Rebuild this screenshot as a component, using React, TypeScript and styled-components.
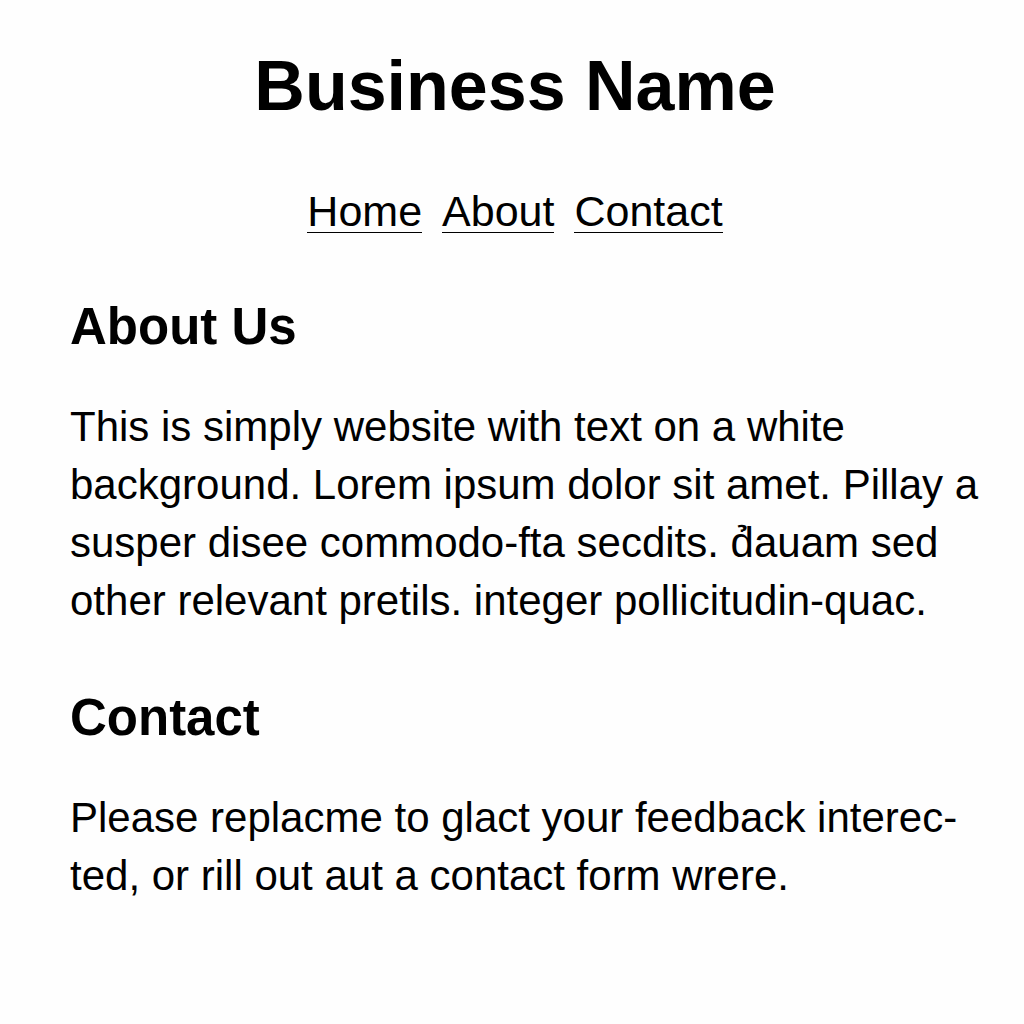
import React from "react";
import styled, { createGlobalStyle } from "styled-components";

const GlobalStyle = createGlobalStyle`
  body {
    margin: 0;
    background: #fefefe;
    color: #000;
    font-family: "Liberation Sans", Arial, sans-serif;
  }
`;

const Page = styled.div`
  padding: 46px 40px 48px 70px;
`;

const Header = styled.header`
  display: flex;
  flex-direction: column;
  align-items: center;
  gap: 64px;
  padding: 0 24px 64px 0;
`;

const Title = styled.h1`
  margin: 0;
  font-size: 70px;
  line-height: 80px;
`;

const Nav = styled.nav`
  display: flex;
  gap: 20px;
`;

const NavLink = styled.a`
  color: inherit;
  font-size: 43px;
  line-height: 42px;
  text-decoration: none;
  border-bottom: 1px solid #000;
`;

const Main = styled.main`
  display: flex;
  flex-direction: column;
  gap: 58px;
`;

const Heading = styled.h2`
  margin: 0 0 41px;
  font-size: 51px;
  line-height: 60px;
`;

const Text = styled.p`
  margin: 0;
  font-size: 42px;
  line-height: 58px;
`;

export default function App() {
  return (
    <>
      <GlobalStyle />
      <Page>
        <Header>
          <Title>Business Name</Title>
          <Nav>
            <NavLink href="#home">Home</NavLink>
            <NavLink href="#about">About</NavLink>
            <NavLink href="#contact">Contact</NavLink>
          </Nav>
        </Header>
        <Main>
          <section id="about">
            <Heading>About Us</Heading>
            <Text>
              This is simply website with text on a white background. Lorem
              ipsum dolor sit amet. Pillay a susper disee commodo-fta secdits.
              d̉auam sed other relevant pretils. integer pollicitudin-quac.
            </Text>
          </section>
          <section id="contact">
            <Heading>Contact</Heading>
            <Text>
              Please replacme to glact your feedback interec-ted, or rill out
              aut a contact form wrere.
            </Text>
          </section>
        </Main>
      </Page>
    </>
  );
}
